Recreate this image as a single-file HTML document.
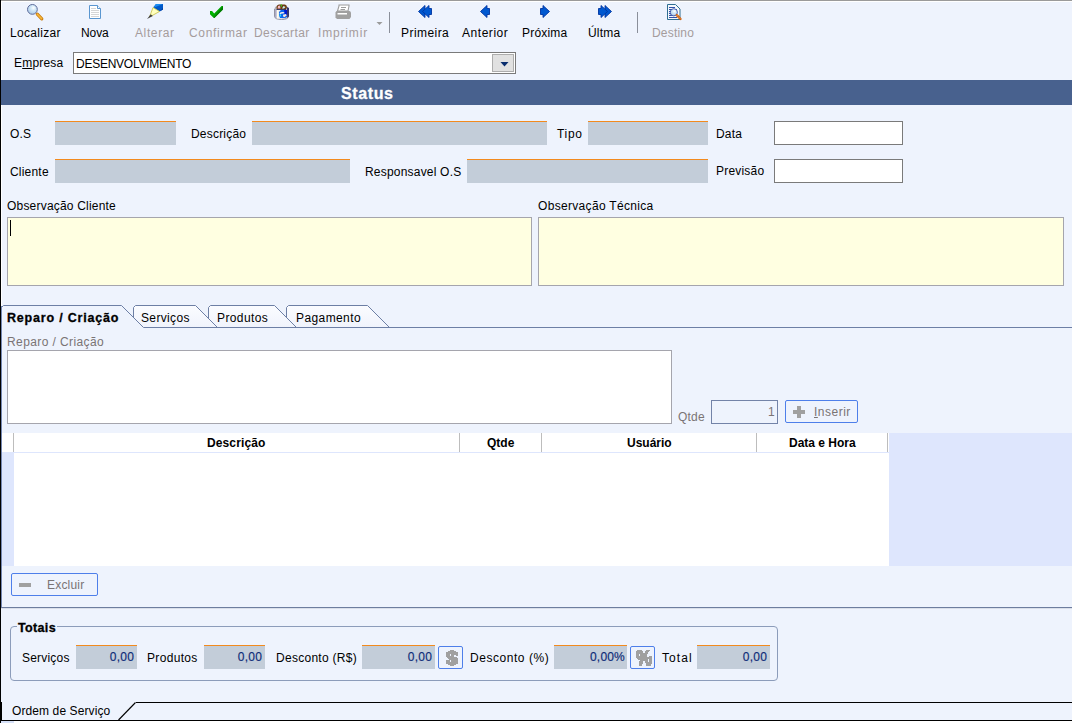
<!DOCTYPE html>
<html><head><meta charset="utf-8">
<style>
*{margin:0;padding:0;box-sizing:border-box}
html,body{width:1073px;height:723px;overflow:hidden;background:#EEF3FD}
body{position:relative;font-family:"Liberation Sans",sans-serif;font-size:12px;color:#000}
.a{position:absolute}
.t{position:absolute;white-space:nowrap;font-size:12px;line-height:14px;letter-spacing:0.2px}
.dis{color:#A59C9C}
.fld{position:absolute;background:#C3CDD9;border-top:1px solid #F28A1E}
.inp{position:absolute;background:#fff;border:1px solid #7A7A7A}
.memo{position:absolute;background:#FFFFE1;border:1px solid #A5A5AD}
.sep{position:absolute;width:1px;background:#8A8F9A}
.btn{position:absolute;border:1px solid #4E7FEA;border-radius:2px}
.val{position:absolute;text-align:right;white-space:nowrap;font-size:12px;line-height:14px;color:#0E2C78;letter-spacing:0.2px;-webkit-text-stroke:0.15px #0E2C78}
.hd{position:absolute;font-weight:bold;font-size:12px;line-height:14px;white-space:nowrap;color:#000}
</style></head><body>
<!-- frame -->
<div class="a" style="left:0;top:0;width:1073px;height:1px;background:#9A9A9A"></div>
<div class="a" style="left:0;top:1px;width:1073px;height:1px;background:#fff"></div>
<div class="a" style="left:0;top:0;width:1px;height:723px;background:#000"></div>
<div class="a" style="left:1px;top:1px;width:1px;height:606px;background:#fff"></div>
<div class="a" style="left:1072px;top:0;width:1px;height:723px;background:#fff"></div>

<!-- toolbar labels -->
<div class="t" style="left:10px;top:26px;letter-spacing:0.32px">Localizar</div>
<div class="t" style="left:81px;top:26px;letter-spacing:-0.1px">Nova</div>
<div class="t dis" style="left:135px;top:26px;letter-spacing:0.62px">Alterar</div>
<div class="t dis" style="left:189px;top:26px;letter-spacing:0.65px">Confirmar</div>
<div class="t dis" style="left:254px;top:26px;letter-spacing:0.41px">Descartar</div>
<div class="t dis" style="left:318px;top:26px;letter-spacing:0.84px">Imprimir</div>
<div class="t" style="left:401px;top:26px;letter-spacing:0.44px">Primeira</div>
<div class="t" style="left:462px;top:26px;letter-spacing:0.54px">Anterior</div>
<div class="t" style="left:522px;top:26px">Próxima</div>
<div class="t" style="left:588px;top:26px">Últma</div>
<div class="t dis" style="left:652px;top:26px">Destino</div>
<div class="sep" style="left:389px;top:12px;height:21px"></div>
<div class="sep" style="left:637px;top:12px;height:21px"></div>


<!-- toolbar icons -->
<svg class="a" style="left:0;top:0" width="1073" height="45">
 <defs>
  <radialGradient id="lens" cx="0.6" cy="0.35" r="0.7">
   <stop offset="0" stop-color="#FFFFFF"/><stop offset="0.35" stop-color="#D4EAF8"/><stop offset="1" stop-color="#A9C8E8"/>
  </radialGradient>
  <linearGradient id="bin" x1="0" x2="1" y1="0" y2="0">
   <stop offset="0" stop-color="#9A9AA8"/><stop offset="0.3" stop-color="#F2F2F8"/><stop offset="1" stop-color="#B8B8C4"/>
  </linearGradient>
 </defs>
 <!-- Localizar -->
 <circle cx="32.4" cy="9.4" r="4.9" fill="url(#lens)" stroke="#5F6C9A" stroke-width="1"/>
 <path d="M37.3 14.2 L41.8 18.8" stroke="#C77A10" stroke-width="3.2" stroke-linecap="round"/>
 <path d="M37.3 14.2 L41.6 18.6" stroke="#F7B838" stroke-width="1.6" stroke-linecap="round"/>
 <!-- Nova -->
 <path d="M89.5 5.5 H97.5 L100.5 8.5 V18.5 H89.5 Z" fill="#fff" stroke="#5A96D0" stroke-width="1"/>
 <path d="M97.5 5.5 V8.5 H100.5" fill="#fff" stroke="#5A96D0" stroke-width="1"/>
 <g stroke="#D6D6D6" stroke-width="1"><path d="M91 8.5 H96"/><path d="M91 10.5 H99"/><path d="M91 12.5 H99"/><path d="M91 14.5 H99"/><path d="M91 16.5 H99"/></g>
 <!-- Alterar pencil -->
 <path d="M153 7.5 L156 4 L163 4 L163 9.5 L159.5 11.5 Z" fill="#0058C8"/>
 <path d="M156 4 L163 4 L153.5 7.8 Z" fill="#1A8CF0"/>
 <path d="M159.5 11.5 L163 9.5 L163 8 Z" fill="#003A98"/>
 <path d="M153 7.5 L159.5 11.5 L149.5 17 Z" fill="#FFFFC0" stroke="#C8C040" stroke-width="0.8"/>
 <path d="M150.8 14.2 L152.8 16 L147 19 Z" fill="#404040"/>
 <!-- Confirmar check -->
 <path d="M210 11 L212 11 L214.2 13.4 L221.6 6 L223 6 L223 9.5 L214.4 18 L213.8 18 L210 14.2 Z" fill="#00A400"/>
 <path d="M223 6.2 L223 9.5 L214.4 18 L213.8 17.4 Z" fill="#007000" opacity="0.8"/>
 <path d="M210.5 11.5 L212 11.5 L213.8 13.8 L213.4 15.5 L210.5 13.8 Z" fill="#00B800"/>
 <!-- Descartar bin -->
 <path d="M274.5 9 Q274.5 6.5 277 6 L286 6 Q288.5 6.5 288.5 9 V16.5 Q288 19.5 281.5 19.5 Q275 19.5 274.5 16.5 Z" fill="url(#bin)"/>
 <path d="M274.5 9 V16.5 Q275 19.5 281.5 19.5 Q288 19.5 288.5 16.5" fill="none" stroke="#8C8C9C" stroke-width="0.9"/>
 <g stroke="#A8A8E0" stroke-width="0.9"><path d="M275.3 11 H277"/><path d="M275.3 13 H277"/><path d="M275.3 15 H277"/><path d="M275.3 17 H277"/></g>
 <path d="M286.8 7 L289 8 V16.5 L287.2 18 Z" fill="#34346E"/>
 <path d="M276.5 8.5 Q276 5 279 4.5 L285 4.5 Q287 5 287 7.5 L286 9 L277.5 9.3 Z" fill="#6A3A10"/>
 <path d="M277.5 8.5 L278 6 L280 5.5 L280.5 8.5 Z" fill="#F4B8C0"/>
 <path d="M282 8.5 L283.5 6 L285.5 7 L284 8.5 Z" fill="#C8F0F0"/>
 <path d="M280.5 4.3 L282 4.5 L281.8 7 L280.8 6.5 Z" fill="#40C020"/>
 <path d="M276.5 9.5 H286" stroke="#28285A" stroke-width="0.9"/>
 <path d="M281 10 H287 V17 L285 18 H280 L279 15.5 V12 Z" fill="#0A66EE"/>
 <path d="M284 10 H287 V14.5 L285 15 Z" fill="#0016CC"/>
 <path d="M279.5 13 Q281.5 11.3 284.5 12.2 L283.5 13.6 Q281.5 13 280 14.2 Z" fill="#FCEDE6"/>
 <path d="M283 14.8 L286 14 L286.6 15.6 L284.2 17.3 L283.2 16.4 Z" fill="#FBE6DE"/>
 <path d="M279.4 14.6 L281 14.2 L281.2 16.6 L279.6 16.2 Z" fill="#22DDF6"/>
 <path d="M277.5 10 V18.5" stroke="#FFFDE8" stroke-width="1.4"/>
 <!-- Imprimir -->
 <path d="M339 5 H349 V6 L348 11 H337.5 L339 6 Z" fill="#fff" stroke="#9C9C9C" stroke-width="1.1"/>
 <path d="M341 7.5 H346 M340.5 9.5 H345" stroke="#9C9C9C" stroke-width="1"/>
 <path d="M336.5 11 H349.5 Q351 11.5 351 13 V17 L349.5 19 H337 L335.5 17.5 V12.5 Z" fill="#A0A0A0"/>
 <path d="M337.5 13 H347 V14.5 H337.5 Z" fill="#fff"/>
 <path d="M376.5 22 H382.5 L379.5 25 Z" fill="#9A9A9A"/>
 <!-- Primeira -->
 <g fill="#0058D0" stroke="#0034A0" stroke-width="0.9" stroke-linejoin="miter">
  <path d="M418.5 11.5 L425 5.5 V17.5 Z"/>
  <path d="M422.5 11.5 L429 5.5 V8.5 H431.5 V14.5 H429 V17.5 Z"/>
 </g>
 <!-- Anterior -->
 <path d="M480.5 11.5 L487 5.5 V8.5 H489.5 V14.5 H487 V17.5 Z" fill="#0058D0" stroke="#0034A0" stroke-width="0.9"/>
 <!-- Proxima -->
 <path d="M549.5 11.5 L543 5.5 V8.5 H540.5 V14.5 H543 V17.5 Z" fill="#0058D0" stroke="#0034A0" stroke-width="0.9"/>
 <!-- Ultima -->
 <g fill="#0058D0" stroke="#0034A0" stroke-width="0.9">
  <path d="M611.5 11.5 L605 5.5 V17.5 Z"/>
  <path d="M607.5 11.5 L601 5.5 V8.5 H598.5 V14.5 H601 V17.5 Z"/>
 </g>
 <!-- Destino -->
 <path d="M667.5 4.5 H675.5 L680 9 V19.5 H667.5 Z" fill="#F4F8FC" stroke="#2F6E92" stroke-width="1"/>
 <g stroke="#3050A8" stroke-width="1"><path d="M669 7.5 H675"/><path d="M669 9.5 H677"/><path d="M669 11.5 H671"/><path d="M669 13.5 H671"/><path d="M669 15.5 H672"/><path d="M669 17.5 H677"/></g>
 <circle cx="673.8" cy="12.3" r="3.6" fill="url(#lens)" stroke="#3A50A8" stroke-width="0.9"/>
 <path d="M676.8 15.2 L680.5 19" stroke="#D06010" stroke-width="2.4" stroke-linecap="round"/>
 <path d="M677 15.4 L680.2 18.6" stroke="#F8E0A0" stroke-width="0.9" stroke-dasharray="1 1"/>
</svg>
<!-- empresa -->
<div class="t" style="left:14px;top:56px">E<u>m</u>presa</div>
<div class="inp" style="left:73px;top:52px;width:443px;height:22px"></div>
<div class="t" style="left:76px;top:57px;letter-spacing:-0.25px">DESENVOLVIMENTO</div>
<!-- combo button -->
<div class="a" style="left:492px;top:54px;width:22px;height:18px;background:#E1E1E1;border:1px solid #ADADAD"></div>
<svg class="a" style="left:500px;top:62px" width="9" height="6"><path d="M0.5 0 H8.5 L4.5 4.6 Z" fill="#0A2D6E"/></svg>


<!-- status bar -->
<div class="a" style="left:1px;top:80px;width:1071px;height:25px;background:#48618E"></div>
<div class="a" style="left:341px;top:85px;font-weight:bold;font-size:16px;line-height:18px;letter-spacing:0.6px;color:#fff;-webkit-text-stroke:0.3px #fff">Status</div>

<!-- row1 -->
<div class="t" style="left:10px;top:127px">O.S</div>
<div class="fld" style="left:55px;top:121px;width:121px;height:24px"></div>
<div class="t" style="left:191px;top:127px">Descrição</div>
<div class="fld" style="left:252px;top:121px;width:295px;height:24px"></div>
<div class="t" style="left:557px;top:127px;letter-spacing:0.7px">Tipo</div>
<div class="fld" style="left:588px;top:121px;width:120px;height:24px"></div>
<div class="t" style="left:716px;top:127px">Data</div>
<div class="inp" style="left:774px;top:121px;width:129px;height:24px"></div>
<!-- row2 -->
<div class="t" style="left:10px;top:165px">Cliente</div>
<div class="fld" style="left:55px;top:159px;width:295px;height:24px"></div>
<div class="t" style="left:365px;top:165px">Responsavel O.S</div>
<div class="fld" style="left:467px;top:159px;width:241px;height:24px"></div>
<div class="t" style="left:716px;top:164px">Previsão</div>
<div class="inp" style="left:774px;top:159px;width:129px;height:24px"></div>

<!-- memos -->
<div class="t" style="left:7px;top:199px">Observação Cliente</div>
<div class="memo" style="left:7px;top:217px;width:525px;height:69px"></div>
<div class="a" style="left:10px;top:220px;width:1px;height:16px;background:#000"></div>
<div class="t" style="left:538px;top:199px;letter-spacing:0.32px">Observação Técnica</div>
<div class="memo" style="left:538px;top:217px;width:526px;height:69px"></div>


<!-- tabs -->
<svg class="a" style="left:0;top:0" width="1073" height="335">
 <defs><linearGradient id="tabg" x1="0" x2="0" y1="0" y2="1"><stop offset="0" stop-color="#FBFCFF"/><stop offset="1" stop-color="#F0F3FC"/></linearGradient></defs>
 <g fill="url(#tabg)" stroke="#6D7FA5" stroke-width="1">
  <path d="M286.5 328 V307.5 L288.5 305.5 H367.5 L389.5 327.5"/>
  <path d="M208.5 328 V307.5 L210.5 305.5 H274.5 L296.5 327.5"/>
  <path d="M133.5 328 V307.5 L135.5 305.5 H195.5 L217.5 327.5"/>
  <path d="M1.5 335 V307.5 L3.5 305.5 H121.5 L143.5 327.5 H1072" fill="#EEF3FD"/>
 </g>
</svg>
<div class="t" style="left:7px;top:311px;font-weight:bold;font-size:12.5px;letter-spacing:0.8px;-webkit-text-stroke:0.3px #000">Reparo / Criação</div>
<div class="t" style="left:141px;top:311px;letter-spacing:0.35px">Serviços</div>
<div class="t" style="left:217px;top:311px;letter-spacing:0.4px">Produtos</div>
<div class="t" style="left:296px;top:311px;letter-spacing:0.4px">Pagamento</div>

<div class="t dis" style="left:7px;top:335px;color:#7A7474;letter-spacing:0.4px">Reparo / Criação</div>
<div class="a" style="left:7px;top:350px;width:665px;height:74px;background:#fff;border:1px solid #A5A5AD"></div>
<div class="t dis" style="left:678px;top:410px;color:#7A7474">Qtde</div>
<div class="a" style="left:711px;top:400px;width:67px;height:24px;border:1px solid #7383A8"></div>
<div class="t" style="left:768px;top:405px;color:#7A7474">1</div>
<div class="btn" style="left:785px;top:400px;width:73px;height:23px"></div>
<div class="a" style="left:797px;top:406px;width:4px;height:12px;background:#A0A0A0"></div>
<div class="a" style="left:793px;top:410px;width:12px;height:4px;background:#A0A0A0"></div>
<div class="t" style="left:814px;top:405px;color:#7A7474;letter-spacing:0.5px"><u>I</u>nserir</div>

<!-- grid -->
<div class="a" style="left:2px;top:433px;width:1070px;height:133px;background:#DEE6FD"></div>
<div class="a" style="left:14px;top:453px;width:875px;height:113px;background:#fff"></div>
<div class="a" style="left:2px;top:433px;width:887px;height:19px;background:#fff"></div>
<div class="a" style="left:13px;top:433px;width:1px;height:19px;background:#BDBDBD"></div>
<div class="a" style="left:459px;top:433px;width:1px;height:19px;background:#BDBDBD"></div>
<div class="a" style="left:541px;top:433px;width:1px;height:19px;background:#BDBDBD"></div>
<div class="a" style="left:756px;top:433px;width:1px;height:19px;background:#BDBDBD"></div>
<div class="a" style="left:887px;top:433px;width:1px;height:19px;background:#BDBDBD"></div>
<div class="hd" style="left:207px;top:436px;letter-spacing:0.12px">Descrição</div>
<div class="hd" style="left:487px;top:436px">Qtde</div>
<div class="hd" style="left:627px;top:436px">Usuário</div>
<div class="hd" style="left:789px;top:436px">Data e Hora</div>

<div class="a" style="left:1px;top:306px;width:1px;height:301px;background:#7487B2"></div>
<!-- excluir -->
<div class="btn" style="left:11px;top:573px;width:87px;height:23px"></div>
<div class="a" style="left:19px;top:583px;width:12px;height:4px;background:#A0A0A0"></div>
<div class="t" style="left:47px;top:578px;color:#7A7474">Excluir</div>

<div class="a" style="left:1px;top:607px;width:1071px;height:1px;background:#6D7D9E"></div>
<div class="a" style="left:1px;top:608px;width:1071px;height:1px;background:#DADFEA"></div>

<!-- totais -->
<div class="a" style="left:10px;top:626px;width:768px;height:55px;border:1px solid #8C9CBA;border-radius:4px"></div>
<div class="a" style="left:17px;top:620px;width:40px;height:12px;background:#EEF3FD"></div>
<div class="t" style="left:18px;top:621px;font-weight:bold;font-size:12.5px;letter-spacing:0.35px;-webkit-text-stroke:0.3px #000">Totais</div>
<div class="t" style="left:22px;top:651px">Serviços</div>
<div class="fld" style="left:76px;top:645px;width:61px;height:24px"></div>
<div class="val" style="left:76px;top:650px;width:58px">0,00</div>
<div class="t" style="left:147px;top:651px;letter-spacing:0.33px">Produtos</div>
<div class="fld" style="left:204px;top:645px;width:61px;height:24px"></div>
<div class="val" style="left:204px;top:650px;width:58px">0,00</div>
<div class="t" style="left:276px;top:651px;letter-spacing:0.28px">Desconto (R$)</div>
<div class="fld" style="left:362px;top:645px;width:73px;height:24px"></div>
<div class="val" style="left:362px;top:650px;width:70px">0,00</div>
<div class="btn" style="left:438px;top:646px;width:25px;height:23px"></div>
<div class="t" style="left:470px;top:651px;letter-spacing:0.55px">Desconto (%)</div>
<div class="fld" style="left:554px;top:645px;width:73px;height:24px"></div>
<div class="val" style="left:554px;top:650px;width:71px">0,00%</div>
<div class="btn" style="left:630px;top:646px;width:25px;height:23px"></div>
<div class="t" style="left:662px;top:651px;letter-spacing:1.1px">Total</div>
<div class="fld" style="left:697px;top:645px;width:73px;height:24px"></div>
<div class="val" style="left:697px;top:650px;width:70px">0,00</div>

<svg class="a" style="left:0;top:0" width="700" height="700" shape-rendering="crispEdges"><path fill="#A0A0A0" d="M450 650h4v1h-4zM448 651h8v1h-8zM446 652h12v1h-12zM446 653h12v1h-12zM446 654h4v1h-4zM451 654h7v1h-7zM446 655h4v1h-4zM451 655h3v1h-3zM456 655h2v1h-2zM446 656h8v1h-8zM447 657h10v1h-10zM448 658h10v1h-10zM449 659h9v1h-9zM446 660h4v1h-4zM451 660h7v1h-7zM446 661h4v1h-4zM451 661h7v1h-7zM446 662h12v1h-12zM446 663h12v1h-12zM448 664h8v1h-8zM450 665h4v1h-4zM637 650h5v1h-5zM646 650h4v1h-4zM636 651h7v1h-7zM645 651h4v1h-4zM636 652h7v1h-7zM645 652h3v1h-3zM636 653h12v1h-12zM636 654h3v1h-3zM640 654h7v1h-7zM636 655h3v1h-3zM640 655h7v1h-7zM636 656h11v1h-11zM649 656h3v1h-3zM636 657h16v1h-16zM637 658h15v1h-15zM638 659h10v1h-10zM649 659h3v1h-3zM640 660h8v1h-8zM649 660h3v1h-3zM639 661h4v1h-4zM645 661h3v1h-3zM649 661h3v1h-3zM639 662h4v1h-4zM645 662h7v1h-7zM639 663h4v1h-4zM646 663h6v1h-6zM639 664h3v1h-3zM646 664h5v1h-5zM639 665h3v1h-3zM646 665h5v1h-5z"/></svg>
<!-- bottom tab -->
<svg class="a" style="left:0;top:0" width="1073" height="723">
 <path d="M1.5 702 V720.5 H1071.5" fill="none" stroke="#000" stroke-width="1" shape-rendering="crispEdges"/>
 <path d="M118.5 720 L135.5 702.5" fill="none" stroke="#000" stroke-width="1.1"/>
 <path d="M135.5 702.5 H1071.5" fill="none" stroke="#000" stroke-width="1" shape-rendering="crispEdges"/>
 <path d="M0.5 702 V721" stroke="#000" stroke-width="1" shape-rendering="crispEdges"/>
</svg>
<div class="a" style="left:1px;top:721px;width:1072px;height:2px;background:#fff"></div>
<div class="a" style="left:1px;top:721px;width:13px;height:2px;background:#D5E0F8"></div>
<div class="t" style="left:12px;top:704px;letter-spacing:0.1px">Ordem de Serviço</div>
</body></html>
